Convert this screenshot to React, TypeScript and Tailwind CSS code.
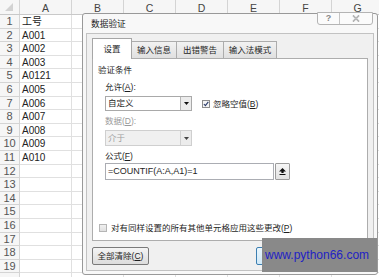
import React from "react";

const columns = ["A", "B", "C", "D", "E", "F", "G"];
const colA = ["工号", "A001", "A002", "A003", "A0121", "A005", "A006", "A007", "A008", "A009", "A010"];
const tabs = [
  { label: "设置", w: "w-[40px]" },
  { label: "输入信息", w: "w-[46px]" },
  { label: "出错警告", w: "w-[48px]" },
  { label: "输入法模式", w: "w-[54px]" },
];

function Key({ k }: { k: string }) {
  return (
    <>
      (<span className="underline underline-offset-[1px]">{k}</span>)
    </>
  );
}

function ArrowBox({ disabled }: { disabled?: boolean }) {
  return (
    <div
      className={`flex w-[11px] shrink-0 items-center justify-center border-l ${
        disabled ? "border-[#d0d0d0] bg-[#ececec]" : "border-[#b5b5b5] bg-[#ececec]"
      }`}
    >
      <svg width="5" height="3" viewBox="0 0 5 3">
        <polygon points="0,0 5,0 2.5,3" fill={disabled ? "#444" : "#111"} />
      </svg>
    </div>
  );
}

function Sheet() {
  return (
    <div>
      <div className="flex h-[15px] border-b border-[#c9c9c9] bg-[#f6f6f6]">
        <div className="relative w-[20px] shrink-0 border-r border-[#d4d4d4]">
          <svg className="absolute left-[5px] top-[3px]" width="8" height="8" viewBox="0 0 8 8">
            <polygon points="8,0 8,8 0,8" fill="#d2d2d2" />
          </svg>
        </div>
        {columns.map((c) => (
          <div
            key={c}
            className="w-[52px] shrink-0 border-r border-[#d4d4d4] text-center text-[10.5px] leading-[16px] text-[#444]"
          >
            {c}
          </div>
        ))}
      </div>
      {Array.from({ length: 19 }).map((_, i) => (
        <div key={i} className="flex h-[13.6px]">
          <div className="w-[20px] shrink-0 border-b border-r border-[#d4d4d4] bg-[#f6f6f6] text-center text-[11px] leading-[13px] text-[#555]">
            {i + 1}
          </div>
          {columns.map((c, j) => (
            <div
              key={c}
              className="w-[52px] shrink-0 border-b border-r border-[#e0e0e0] pl-[2px] text-[10px] leading-[13px] text-[#222]"
            >
              {j === 0 ? colA[i] ?? "" : ""}
            </div>
          ))}
        </div>
      ))}
      {/* partly visible last row */}
      <div className="flex h-[13.6px]">
        <div className="w-[20px] shrink-0 border-r border-[#d4d4d4] bg-[#f6f6f6]" />
        {columns.map((c) => (
          <div key={c} className="w-[52px] shrink-0 border-r border-[#e0e0e0]" />
        ))}
      </div>
    </div>
  );
}

function Dialog() {
  return (
    <div className="absolute left-[82px] top-[13px] flex h-[262px] w-[296px] flex-col rounded-[3px] border border-[#999] bg-[#f8f8f8] px-[3px] pb-[3px] text-[8.5px] text-[#1e1e1e]">
      {/* title bar */}
      <div className="flex h-[19px] items-center pl-[5px] text-[8.7px] leading-[12px]">数据验证</div>
      <div className="absolute right-[4px] top-[-2px] flex h-[13px] rounded-b-[3px] border border-[#b4b4b4] bg-[#fbfbfb]">
        <div className="flex w-[22px] items-center justify-center border-r border-[#c4c4c4] text-[9px] font-bold leading-none text-[#888]">
          ?
        </div>
        <div className="flex w-[32px] items-center justify-center">
          <svg width="8" height="7" viewBox="0 0 8 7">
            <path d="M1 0.5 L7 6.5 M7 0.5 L1 6.5" stroke="#9a9a9a" strokeWidth="1.6" />
            <path d="M1 0.5 L7 6.5 M7 0.5 L1 6.5" stroke="#f4f4f4" strokeWidth="0.5" />
          </svg>
        </div>
      </div>

      {/* body */}
      <div className="flex flex-1 flex-col border border-[#c2c2c2] bg-[#f0f0f0] px-[5px] pt-[4px]">
        <div className="flex h-[20px] items-end">
          {tabs.map((t, i) =>
            i === 0 ? (
              <div
                key={t.label}
                className={`relative z-10 mb-[-1px] flex h-[21px] ${t.w} items-center justify-center border border-b-0 border-[#a6a6a6] bg-white leading-[12px]`}
              >
                {t.label}
              </div>
            ) : (
              <div
                key={t.label}
                className={`flex h-[17px] ${t.w} ml-[-1px] items-center justify-center border border-b-0 border-[#acacac] bg-gradient-to-b from-[#f2f2f2] to-[#e0e0e0] leading-[12px]`}
              >
                {t.label}
              </div>
            )
          )}
        </div>

        {/* tab panel */}
        <div className="flex h-[183px] flex-col border border-[#adadad] bg-white pl-[5px] pt-[5px] leading-[12px]">
          <div>验证条件</div>
          <div className="ml-[7px] mt-[5px]">
            允许<Key k="A" />:
          </div>
          <div className="ml-[7px] mt-[3px] flex items-center">
            <div className="flex h-[15px] w-[87px] border border-[#a9a9a9] bg-white">
              <div className="flex-1 pl-[2px] leading-[13px]">自定义</div>
              <ArrowBox />
            </div>
            <div className="ml-[10px] flex items-center">
              <div className="flex h-[8px] w-[8px] items-center justify-center border border-[#8c8c8c] bg-[#f4f4f4]">
                <svg width="7" height="6" viewBox="0 0 7 6">
                  <path d="M1 3 L2.8 5 L6.2 0.6" stroke="#2a3b6a" strokeWidth="1.3" fill="none" />
                </svg>
              </div>
              <div className="ml-[3px]">
                忽略空值<Key k="B" />
              </div>
            </div>
          </div>
          <div className="ml-[7px] mt-[4px] text-[#9a9a9a]">
            数据<Key k="D" />:
          </div>
          <div className="ml-[7px] mt-[3px] flex h-[16px] w-[87px] border border-[#cfcfcf] bg-[#f0f0f0]">
            <div className="flex-1 pl-[2px] leading-[14px] text-[#a0a0a0]">介于</div>
            <ArrowBox disabled />
          </div>
          <div className="ml-[7px] mt-[4px]">
            公式<Key k="F" />
          </div>
          <div className="ml-[7px] mt-[1px] flex items-center">
            <div className="h-[17px] w-[169px] border border-[#abadb3] bg-white pl-[2px] text-[9px] leading-[15px]">
              =COUNTIF(A:A,A1)=1
            </div>
            <div className="ml-[1px] flex h-[17px] w-[15px] items-center justify-center rounded-[1px] border border-[#9c9c9c] bg-gradient-to-b from-[#f6f6f6] to-[#e2e2e2]">
              <svg width="7" height="7" viewBox="0 0 7 7">
                <polygon points="3.5,0 7,3.5 4.6,3.5 4.6,5 2.4,5 2.4,3.5 0,3.5" fill="#111" />
                <rect x="0.5" y="6" width="6" height="1" fill="#111" />
              </svg>
            </div>
          </div>
          <div className="mb-[6px] ml-[1px] mt-auto flex items-center">
            <div className="h-[8px] w-[8px] border border-[#b5b5b5] bg-gradient-to-b from-[#f0f0f0] to-[#e0e0e0]" />
            <div className="ml-[4px]">
              对有同样设置的所有其他单元格应用这些更改<Key k="P" />
            </div>
          </div>
        </div>

        {/* buttons (the right ones sit under the watermark) */}
        <div className="mt-[6px] flex">
          <div className="flex h-[18px] w-[57px] items-center justify-center rounded-[2px] border border-[#7a7a7a] bg-gradient-to-b from-[#f4f4f4] to-[#dcdcdc] leading-[12px]">
            全部清除<Key k="C" />
          </div>
          <div className="ml-auto h-[18px] w-[55px] rounded-[2px] border border-[#3c7fb1] bg-gradient-to-b from-[#eaf6fd] to-[#d0e8f7]" />
          <div className="ml-[5px] h-[18px] w-[52px] rounded-[2px] border border-[#7a7a7a] bg-[#e8e8e8]" />
        </div>
      </div>
    </div>
  );
}

export default function App() {
  return (
    <div className="relative h-[277px] w-[379px] overflow-hidden bg-white font-['Liberation_Sans','Noto_Sans_CJK_SC',sans-serif]">
      <Sheet />
      <Dialog />
      <div className="absolute left-[262px] top-[238px] flex h-[34px] w-[115px] items-center bg-[#898989] pl-[3px] text-[12px] text-[#1f22c4]">
        www.python66.com
      </div>
    </div>
  );
}
